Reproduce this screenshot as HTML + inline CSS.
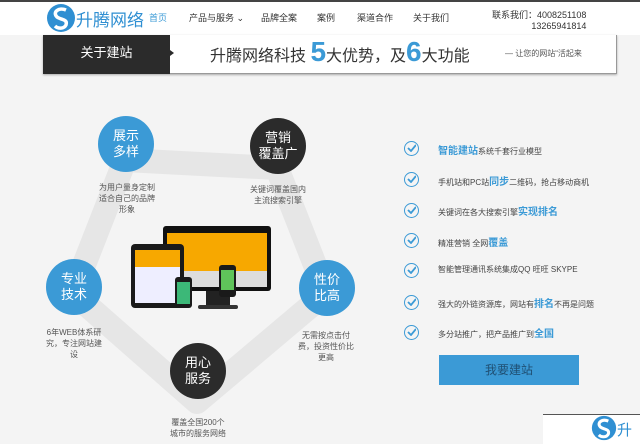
<!DOCTYPE html>
<html><head><meta charset="utf-8"><style>
*{margin:0;padding:0;box-sizing:border-box}
body{width:640px;height:444px;overflow:hidden;background:#f4f4f4;font-family:"Liberation Sans","Noto Sans CJK SC",sans-serif;position:relative;color:#333}
.hdr{position:absolute;left:0;top:0;width:640px;height:35px;background:#fff;border-top:2px solid #444}
.a{position:absolute;white-space:nowrap}
.nav{font-size:9px;color:#333;top:11px}
.circ{position:absolute;width:56px;height:56px;border-radius:50%;color:#fff;font-size:13px;line-height:16px;text-align:center;padding-top:12px}
.circ:after{content:"";position:absolute;left:24px;bottom:-5px;border-left:4px solid transparent;border-right:4px solid transparent;border-top:7px solid inherit}
.b{background:#3b9ad6}.d{background:#2b2b2b}
.b:after{border-top-color:#3b9ad6}.d:after{border-top-color:#2b2b2b}
.cap{position:absolute;font-size:8px;line-height:11px;color:#555;text-align:center;width:60px}
.chk{position:absolute;left:404px;width:15px;height:15px;border:1.5px solid #3b9ad6;border-radius:50%}
.chk svg{position:absolute;left:2px;top:2px}
.li{position:absolute;left:438px;font-size:8px;color:#444;white-space:nowrap}
.li b{color:#3b9ad6;font-size:10px}
</style></head><body>
<div class="hdr"></div>
<svg class="a" style="left:46px;top:3px" width="30" height="30" viewBox="0 0 30 30"><circle cx="15" cy="15" r="14" fill="#2f8fd2"/><path d="M20 7C13 4 6 9 11 14c4 3 11 2 9 8-2 4-8 4-11 1" stroke="#fff" stroke-width="3.5" fill="none"/></svg>
<div class="a" style="left:76px;top:6px;font-size:17px;color:#2f8fd2">升腾网络</div>
<div class="a nav" style="left:149px;color:#3b9ad6">首页</div>
<div class="a nav" style="left:189px">产品与服务 ⌄</div>
<div class="a nav" style="left:261px">品牌全案</div>
<div class="a nav" style="left:317px">案例</div>
<div class="a nav" style="left:357px">渠道合作</div>
<div class="a nav" style="left:413px">关于我们</div>
<div class="a" style="left:492px;top:10px;font-size:9px;line-height:11px;text-align:right">联系我们：4008251108<br>13265941814</div>
<div class="a" style="left:43px;top:35px;width:574px;height:39px;background:#fff;border:1px solid #999;border-top:none;box-shadow:0 1px 2px #aaa"></div>
<div class="a" style="left:43px;top:35px;width:127px;height:39px;background:#2b2b2b;color:#fff;font-size:13px;line-height:36px;text-align:center">关于建站</div>
<div class="a" style="left:170px;top:50px;border-left:4px solid #2b2b2b;border-top:3px solid transparent;border-bottom:3px solid transparent"></div>
<div class="a" style="left:210px;top:36px;font-size:16px;line-height:32px;color:#333">升腾网络科技 <span style="font-size:28px;color:#3b9ad6;font-weight:bold">5</span>大优势，及<span style="font-size:28px;color:#3b9ad6;font-weight:bold">6</span>大功能</div>
<div class="a" style="left:505px;top:48px;font-size:8px;color:#555">— 让您的网站“活起来</div>
<svg class="a" style="left:0;top:80px" width="400" height="364"><polygon points="125,80 277,88 326,213 197,322 73,213" fill="none" stroke="#e6e6e6" stroke-width="24" stroke-linejoin="round"/></svg>
<div class="circ b" style="left:98px;top:116px">展示<br>多样</div>
<div class="circ d" style="left:250px;top:118px">营销<br>覆盖广</div>
<div class="circ b" style="left:46px;top:259px">专业<br>技术</div>
<div class="circ b" style="left:299px;top:260px">性价<br>比高</div>
<div class="circ d" style="left:170px;top:343px">用心<br>服务</div>
<div class="cap" style="left:97px;top:182px">为用户量身定制适合自己的品牌形象</div>
<div class="cap" style="left:248px;top:184px">关键词覆盖国内主流搜索引擎</div>
<div class="cap" style="left:44px;top:327px">6年WEB体系研究，专注网站建设</div>
<div class="cap" style="left:296px;top:330px">无需按点击付费，投资性价比更高</div>
<div class="cap" style="left:168px;top:417px">覆盖全国200个城市的服务网络</div>
<div class="a" style="left:163px;top:226px;width:108px;height:65px;background:#111;border-radius:3px"></div>
<div class="a" style="left:167px;top:233px;width:100px;height:38px;background:#f7a800"></div>
<div class="a" style="left:167px;top:271px;width:100px;height:16px;background:#ddd"></div>
<div class="a" style="left:206px;top:291px;width:24px;height:16px;background:#222"></div>
<div class="a" style="left:198px;top:305px;width:40px;height:4px;background:#333;border-radius:2px"></div>
<div class="a" style="left:131px;top:244px;width:53px;height:64px;background:#1a1a1a;border-radius:4px"></div>
<div class="a" style="left:135px;top:250px;width:45px;height:17px;background:#f7a800"></div>
<div class="a" style="left:135px;top:267px;width:45px;height:36px;background:#eef"></div>
<div class="a" style="left:175px;top:277px;width:17px;height:31px;background:#1a1a1a;border-radius:3px"></div>
<div class="a" style="left:177px;top:282px;width:13px;height:22px;background:#3cb878"></div>
<div class="a" style="left:219px;top:265px;width:17px;height:32px;background:#1a1a1a;border-radius:3px"></div>
<div class="a" style="left:221px;top:270px;width:13px;height:20px;background:#5fc45a"></div>
<div class="chk" style="top:141px"><svg width="9" height="8"><path d="M1 4l3 3 5-6" stroke="#3b9ad6" stroke-width="1.8" fill="none"/></svg></div>
<div class="chk" style="top:172px"><svg width="9" height="8"><path d="M1 4l3 3 5-6" stroke="#3b9ad6" stroke-width="1.8" fill="none"/></svg></div>
<div class="chk" style="top:203px"><svg width="9" height="8"><path d="M1 4l3 3 5-6" stroke="#3b9ad6" stroke-width="1.8" fill="none"/></svg></div>
<div class="chk" style="top:233px"><svg width="9" height="8"><path d="M1 4l3 3 5-6" stroke="#3b9ad6" stroke-width="1.8" fill="none"/></svg></div>
<div class="chk" style="top:263px"><svg width="9" height="8"><path d="M1 4l3 3 5-6" stroke="#3b9ad6" stroke-width="1.8" fill="none"/></svg></div>
<div class="chk" style="top:295px"><svg width="9" height="8"><path d="M1 4l3 3 5-6" stroke="#3b9ad6" stroke-width="1.8" fill="none"/></svg></div>
<div class="chk" style="top:325px"><svg width="9" height="8"><path d="M1 4l3 3 5-6" stroke="#3b9ad6" stroke-width="1.8" fill="none"/></svg></div>
<div class="li" style="top:142px"><b>智能建站</b>系统千套行业模型</div>
<div class="li" style="top:173px">手机站和PC站<b>同步</b>二维码，抢占移动商机</div>
<div class="li" style="top:203px">关键词在各大搜索引擎<b>实现排名</b></div>
<div class="li" style="top:234px">精准营销 全网<b>覆盖</b></div>
<div class="li" style="top:264px">智能管理通讯系统集成QQ 旺旺 SKYPE</div>
<div class="li" style="top:295px">强大的外链资源库，网站有<b>排名</b>不再是问题</div>
<div class="li" style="top:325px">多分站推广，把产品推广到<b>全国</b></div>
<div class="a" style="left:439px;top:355px;width:140px;height:30px;background:#3b9ad6;color:#1f4f73;font-size:12px;line-height:30px;text-align:center">我要建站</div>
<div class="a" style="left:543px;top:414px;width:97px;height:30px;background:#fff;border-top:1px solid #555"></div>
<svg class="a" style="left:591px;top:415px" width="26" height="26" viewBox="0 0 30 30"><circle cx="15" cy="15" r="14" fill="#2f8fd2"/><path d="M20 7C13 4 6 9 11 14c4 3 11 2 9 8-2 4-8 4-11 1" stroke="#fff" stroke-width="3.5" fill="none"/></svg>
<div class="a" style="left:617px;top:419px;font-size:15px;color:#2f8fd2">升</div>
</body></html>
